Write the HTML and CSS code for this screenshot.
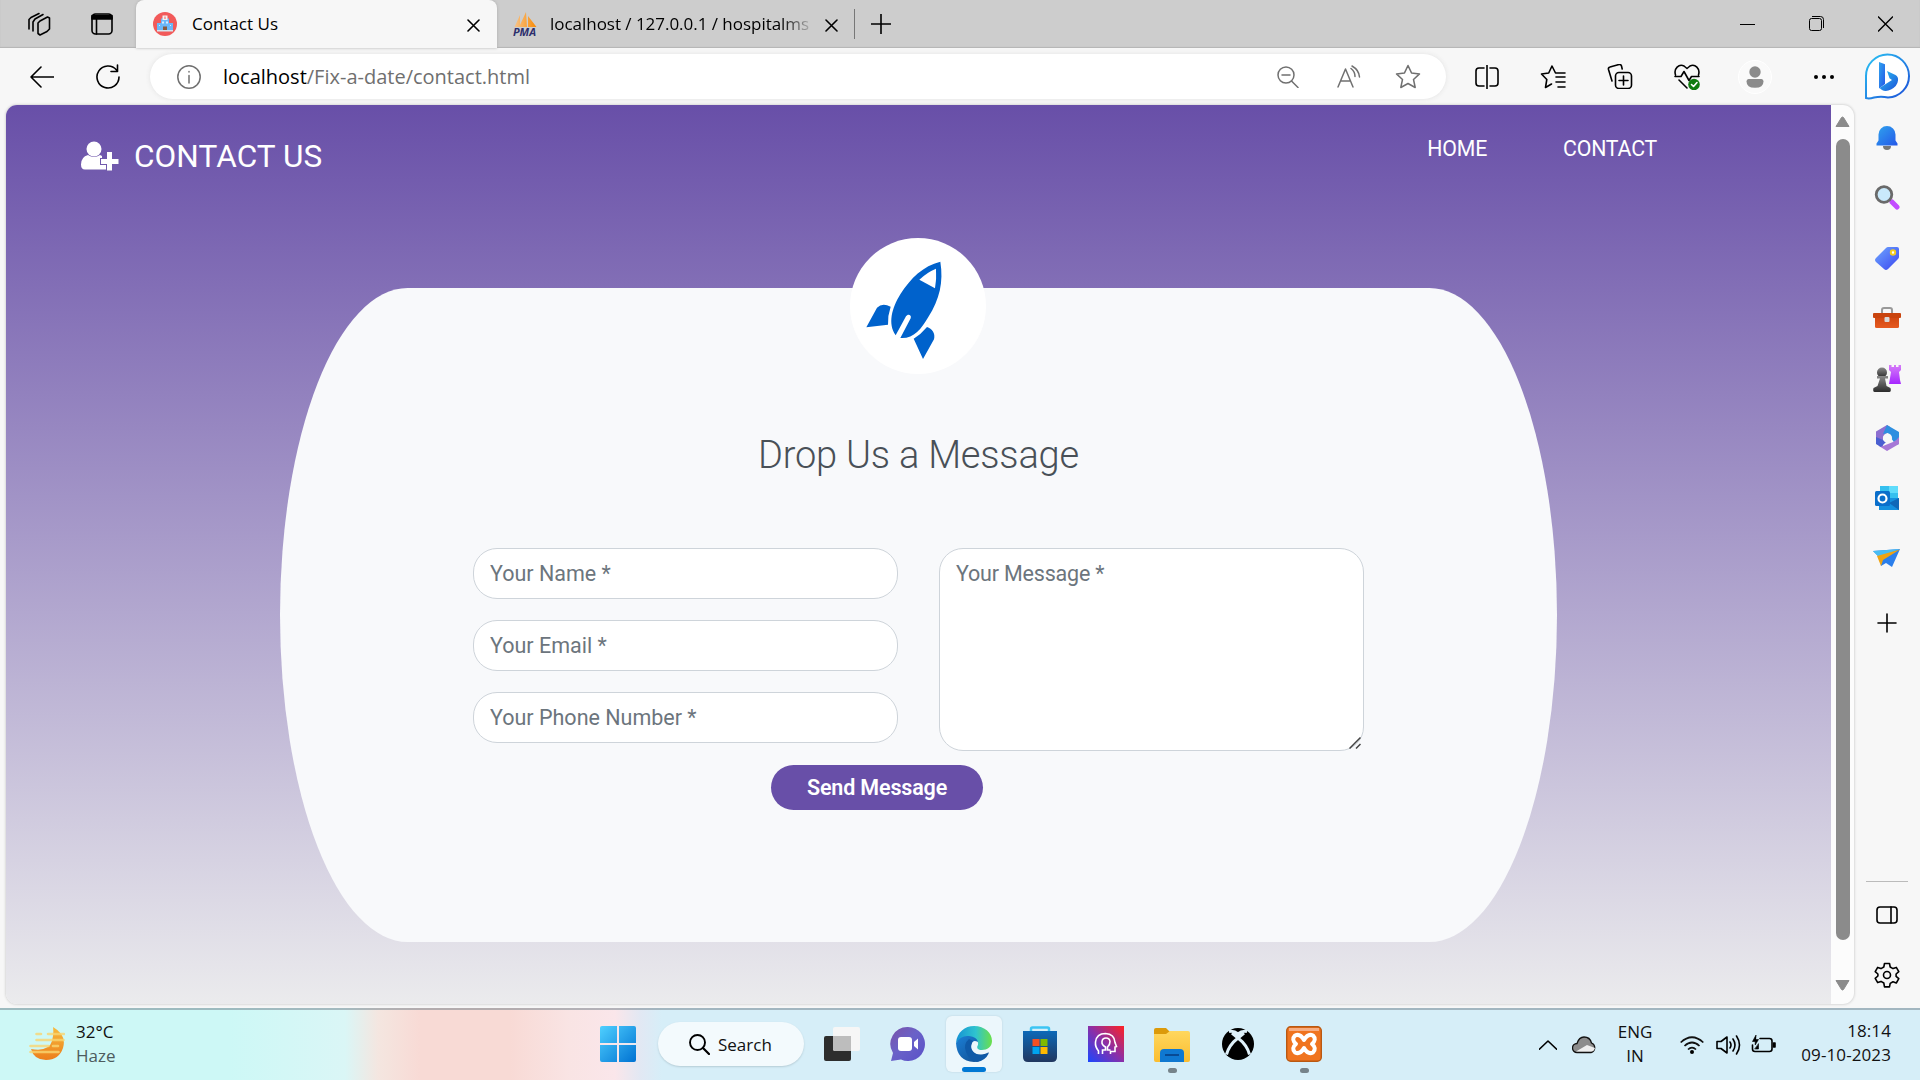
FILE: index.html
```html
<!DOCTYPE html>
<html lang="en">
<head>
<meta charset="utf-8">
<title>Contact Us</title>
<link rel="stylesheet" href="styles.css">
</head>
<body>
<svg width="0" height="0" class="defs">
  <defs>
    <linearGradient id="blue" x1="0" y1="0" x2="1" y2="1"><stop offset="0" stop-color="#2fa4ee"/><stop offset="1" stop-color="#2457e8"/></linearGradient>
    <linearGradient id="bing" x1="0" y1="0" x2="1" y2="1"><stop offset="0" stop-color="#2bc4f3"/><stop offset="1" stop-color="#1c4fd8"/></linearGradient>
    <linearGradient id="tag" x1="0" y1="0" x2="1" y2="1"><stop offset="0" stop-color="#6fa8ff"/><stop offset="1" stop-color="#3a45f0"/></linearGradient>
    <linearGradient id="orange" x1="0" y1="0" x2="0" y2="1"><stop offset="0" stop-color="#c8400c"/><stop offset="1" stop-color="#e65a20"/></linearGradient>
    <linearGradient id="grey" x1="0" y1="0" x2="0" y2="1"><stop offset="0" stop-color="#8a8a8a"/><stop offset="1" stop-color="#2c2c2c"/></linearGradient>
    <linearGradient id="violet" x1="0" y1="0" x2="0" y2="1"><stop offset="0" stop-color="#d57cf8"/><stop offset="1" stop-color="#a626ff"/></linearGradient>
    <linearGradient id="moon" x1="0" y1="0" x2="0" y2="1"><stop offset="0" stop-color="#f6bb3f"/><stop offset="1" stop-color="#ec7e1c"/></linearGradient>
    <linearGradient id="win" x1="0" y1="0" x2="1" y2="1"><stop offset="0" stop-color="#4fd0ff"/><stop offset="1" stop-color="#0072d2"/></linearGradient>
    <linearGradient id="chat" x1="0" y1="0" x2="1" y2="1"><stop offset="0" stop-color="#7b52a8"/><stop offset=".45" stop-color="#6a62c8"/><stop offset="1" stop-color="#5a50c8"/></linearGradient>
    <linearGradient id="edgeTop" x1="0" y1="0" x2="1" y2="0"><stop offset="0" stop-color="#1592d4"/><stop offset=".55" stop-color="#2fc3cf"/><stop offset="1" stop-color="#6be04a"/></linearGradient>
    <linearGradient id="edgeLow" x1="0" y1="0" x2="1" y2="1"><stop offset="0" stop-color="#1b7fd6"/><stop offset="1" stop-color="#114a8b"/></linearGradient>
    <linearGradient id="store" x1="0" y1="0" x2="0" y2="1"><stop offset="0" stop-color="#0c69b8"/><stop offset="1" stop-color="#21375f"/></linearGradient>
    <linearGradient id="head" x1="0" y1="1" x2="1" y2="0"><stop offset="0" stop-color="#1a46ff"/><stop offset=".5" stop-color="#8a2fa8"/><stop offset="1" stop-color="#ff2222"/></linearGradient>
    <linearGradient id="folder" x1="0" y1="0" x2="0" y2="1"><stop offset="0" stop-color="#ffd75e"/><stop offset="1" stop-color="#fbbd30"/></linearGradient>
    <linearGradient id="sail" x1="0" y1="0" x2="1" y2="0"><stop offset="0" stop-color="#f7c48a"/><stop offset="1" stop-color="#f98b05"/></linearGradient>
  </defs>
</svg>

<div class="tabs">
  <div class="tab-tools">
    <svg width="24" height="26" viewBox="0 0 24 26" class="line"><path d="M2 18V8.500L4 6.500 12 2.500M6 20V11L8 8l8-4.500M13 10l7.500-4 2 1v11l-2.500 2.500L13 24l-2-1.500V12z"/></svg>
    <svg width="22" height="22" viewBox="0 0 22 22" class="line"><rect x="1" y="1" width="20" height="20" rx="3.500"/><path d="M1 2.500h20V6H1z" fill="#000"/><path d="M5.500 6v15"/></svg>
  </div>
  <div class="tab active">
    <svg width="24" height="24" viewBox="0 0 24 24"><circle cx="12" cy="12" r="12" fill="#f25a5a"/><path d="M4 11h4V6.500h8V11h4v8H4z" fill="#6bb7f8"/><path d="M9.500 3.500h5V8h-5z" fill="#f3f3f3"/><path d="M11.500 4.500h1v2.500h-1z" fill="#f25a5a"/><path d="M9 9.500h2v2H9zm4 0h2v2h-2zM6 13h1v1H6zm11 0h1v1h-1z" fill="#d4ecff"/><path d="M10 14.500h4V19h-4z" fill="#8b5a3c"/><path d="M4 18h16v1.500H4z" fill="#d6e6ef"/></svg>
    <span class="tab-title">Contact Us</span>
    <svg width="13" height="13" viewBox="0 0 13 13" class="line"><path d="M1 1l11 11M12 1L1 12"/></svg>
  </div>
  <div class="tab">
    <svg width="24" height="25" viewBox="0 0 24 25"><path d="M7 3v12H1.500zM13 0l1 15H6zM15 4l8.500 11H15z" fill="url(#sail)"/><text x="0" y="24" class="pma" textLength="23" lengthAdjust="spacingAndGlyphs">PMA</text></svg>
    <span class="tab-title fade">localhost / 127.0.0.1 / hospitalms</span>
    <svg width="13" height="13" viewBox="0 0 13 13" class="line"><path d="M1 1l11 11M12 1L1 12"/></svg>
  </div>
  <div class="new-tab">
    <svg width="20" height="20" viewBox="0 0 20 20" class="line"><path d="M10 0v20M0 10h20"/></svg>
  </div>
  <div class="window-controls">
    <svg width="15" height="16" viewBox="0 0 15 16" class="thin"><path d="M0 8.500h15"/></svg>
    <svg width="15" height="16" viewBox="0 0 15 16" class="thin"><rect x=".5" y="2.500" width="12" height="12" rx="2"/><path d="M3 .5h8.500a3 3 0 0 1 3 3V12"/></svg>
    <svg width="15" height="16" viewBox="0 0 15 16" class="thin close"><path d="M0 .5l15 15M15 .5l-15 15"/></svg>
  </div>
</div>

<div class="toolbar">
  <svg class="back line" width="24" height="22" viewBox="0 0 24 22"><path d="M24 11H1M11 1L1 11l10 10"/></svg>
  <svg class="reload line" width="24" height="26" viewBox="0 0 24 26"><path d="M20.500 6A11 11 0 1 0 23 13M21.500 1v6.500H15"/></svg>
  <div class="address">
    <svg width="24" height="24" viewBox="0 0 24 24" class="line soft"><circle cx="12" cy="12" r="11.200"/><path d="M12 10.500V18M12 6.500v.5"/></svg>
    <span class="url"><b>localhost</b>/Fix-a-date/contact.html</span>
    <svg width="23" height="22" viewBox="0 0 23 22" class="line soft"><circle cx="9" cy="9" r="8"/><path d="M5 9h8M14.500 15l6.500 6.500"/></svg>
    <svg width="24" height="24" viewBox="0 0 24 24" class="line soft"><path d="M1 22L8.500 4 16 22M3.500 16h10M14 3.500q4 3 4 8M15 1q7 4 7.500 11"/></svg>
    <svg width="26" height="25" viewBox="0 0 26 25" class="line soft"><path d="M13 1.500l3.500 7.400 8 1-6 5.600 1.700 8L13 19.500 5.800 23.500l1.700-8-6-5.600 8-1z"/></svg>
  </div>
  <div class="actions">
    <svg width="24" height="24" viewBox="0 0 24 24" class="line"><path d="M9 3H4a3 3 0 0 0-3 3v12a3 3 0 0 0 3 3h5M12 0v24M15 3h5a3 3 0 0 1 3 3v12a3 3 0 0 1-3 3h-5"/></svg>
    <svg width="26" height="24" viewBox="0 0 26 24" class="line"><path d="M15.500 8L12 1 8.700 8 1.500 9l5.300 5.500L5.500 22.500l6-3.500M16 12h9M16 17h9M18 22h7M15.500 8h9.500"/></svg>
    <svg width="26" height="25" viewBox="0 0 26 25" class="line"><rect x="8.500" y="8.500" width="16" height="16" rx="3.500"/><path d="M16.500 12v9M12 16.500h9M5 17L1.500 5.500Q1 3.500 3 3l9-2.500q2-.3 2.500 1.500l.7 3"/></svg>
    <svg width="26" height="26" viewBox="0 0 26 26" class="line"><path d="M1.500 11C-.5 4.500 5-.5 10 2l3 2.500L16 2c5-2.500 10.500 2.500 8.500 9M1 12.500h6l3-5 5 9 2.500-4H25M5 16l8 8"/><circle cx="20" cy="20.500" r="5.800" fill="#107c10" stroke="none"/><path d="M17.500 20.500l2 2 3.500-4" stroke="#fff"/></svg>
    <svg width="34" height="34" viewBox="0 0 34 34"><circle cx="17" cy="17" r="16.500" fill="#fafafa" stroke="#fff"/><circle cx="17" cy="12" r="5.700" fill="#8b8b8b"/><path d="M10.500 19h13q2 0 2 2.500 0 6.300-8.500 6.300t-8.500-6.300Q8.500 19 10.500 19z" fill="#8b8b8b"/></svg>
    <svg width="20" height="6" viewBox="0 0 20 6"><circle cx="2" cy="3" r="2"/><circle cx="10" cy="3" r="2"/><circle cx="18" cy="3" r="2"/></svg>
  </div>
  <svg class="bing" width="46" height="48" viewBox="0 0 46 48"><path d="M2 45V23A21.500 21.500 0 1 1 24 44.500Q17 43 10 44.500 5 46 2 45z" fill="#fff" stroke="url(#bing)" stroke-width="2"/><path d="M15 9l6 2.200V31l-6 4.500z" fill="url(#blue)"/><path d="M23 18l8.500 4q3 1.500 2.500 5.500-.5 5.500-7 9-5 2.500-9 .5l-2.500-2 12.500-8-2.500-1.700z" fill="url(#bing)"/></svg>
</div>

<div class="workspace">
  <div class="viewport">
    <div class="page">
      <header class="site-header">
        <h1 class="brand">
          <svg width="38" height="30" viewBox="0 0 38 30" fill="#fff"><circle cx="13" cy="8" r="7.500"/><path d="M7 14q6 4 12 0l2 1v2h-2v7h6v4.500H4q-4 0-4-5Q0 16 7 14z"/><path d="M26 11h5v7h6.500v5H31v6.500h-5V23h-6v-5h6z"/></svg>
          <span>CONTACT US</span>
        </h1>
        <nav class="site-nav"><a>HOME</a><a>CONTACT</a></nav>
      </header>
      <main class="contact">
        <div class="badge">
          <svg width="136" height="136" viewBox="90 54 408 408" fill="#0062cc"><path d="M361 125c10 62-2 112-36 166-22 38-45 66-84 63l31-59c4-11-9-15-14-6l-31 57c-24-34-12-81 14-123 30-48 69-86 120-98z"/><path d="M298 179q23-22 50-33 2 31-3 59z" fill="#fff"/><path d="M139 322l32-59q16-16 41-3-9 26-8 54zM281 356l28 61 33-59c5-18-6-33-21-37q-18 22-40 35z"/></svg>
        </div>
        <h2 class="title">Drop Us a Message</h2>
        <form class="form">
          <div class="column">
            <input class="field" type="text" placeholder="Your Name *">
            <input class="field" type="text" placeholder="Your Email *">
            <input class="field" type="text" placeholder="Your Phone Number *">
          </div>
          <div class="message-box">
            <textarea class="field message" placeholder="Your Message *"></textarea>
            <svg class="grip" width="12" height="12" viewBox="0 0 12 12"><path d="M.5 11.500l11-11M7 11.500L11.500 7" stroke="#444" stroke-width="1.500"/></svg>
          </div>
        </form>
        <button class="send" type="button">Send Message</button>
      </main>
    </div>
    <div class="scrollbar">
      <svg width="15" height="11" viewBox="0 0 15 11"><path d="M1 10.500L6.500 1.500q1-1 2 0L14 10.500z" fill="#8b8b8b" stroke="#8b8b8b"/></svg>
      <div class="thumb"></div>
      <svg width="15" height="11" viewBox="0 0 15 11"><path d="M1 .5L6.500 9.500q1 1 2 0L14 .5z" fill="#8b8b8b" stroke="#8b8b8b"/></svg>
    </div>
  </div>

  <aside class="sidebar">
    <svg width="26" height="26" viewBox="0 0 26 26"><path d="M9 21h8q0 4-4 4t-4-4z" fill="#777"/><path d="M2.500 20.500v-2l2-3V9.500a8.500 8.500 0 0 1 17 0v6l2 3v2z" fill="url(#blue)"/></svg>
    <svg width="26" height="26" viewBox="0 0 26 26"><path d="M18 17l5 5" stroke="#c24bff" stroke-width="5" stroke-linecap="round"/><circle cx="10" cy="9.500" r="7.800" fill="#c9e9fb" stroke="#6a6a6a" stroke-width="2.800"/></svg>
    <svg width="26" height="26" viewBox="0 0 26 26"><path d="M14 2h9q2 0 2 2v8q0 1-1 2L14 24q-2 2-4 0l-8-7q-2-2 0-4L12 3q1-1 2-1z" fill="url(#tag)"/><circle cx="19" cy="7.500" r="2.200" fill="#fff" stroke="#f5cc1d" stroke-width="2"/></svg>
    <svg width="28" height="24" viewBox="0 0 28 24"><path d="M9 7V4q0-2 2-2h6q2 0 2 2v3" fill="none" stroke="#999" stroke-width="2"/><rect x="2" y="7" width="24" height="15" rx="1.500" fill="url(#orange)"/><rect x="0" y="7" width="28" height="5" rx="1" fill="#c9440e"/><rect x="11.500" y="11" width="5" height="5" rx="1" fill="#d9d9d9"/></svg>
    <svg width="28" height="28" viewBox="0 0 28 28"><path d="M16 1h2.500v2H21V1h2v2h2.500V1H28v5l-2 2 1 8 1 4H16l2-12-2-2z" fill="url(#violet)"/><g fill="url(#grey)"><circle cx="9" cy="8.500" r="5"/><path d="M4 12h11v2.500h-3l1.500 7.500 4 2q1 4-1 4h-15q-2 0-1-4l4-2L7 14.500H4z"/></g></svg>
    <svg width="26" height="28" viewBox="0 0 26 28"><path d="M13 1L2 7.500v12L7 23l2-1V13l4-4 3-6z" fill="#8d6fd0"/><path d="M13 1l12 7v12l-3 1-5-7-3-5-5 1z" fill="#2e8fe0"/><path d="M5 22l8 5 12-7v-7q-2 3-6 5L9 22z" fill="#a678d6"/><path d="M2 13v7l5 3 5-5-3-2z" fill="#4a5fd0"/><circle cx="13.500" cy="14" r="4.600" fill="#f7f7f7"/></svg>
    <svg width="26" height="26" viewBox="0 0 26 26"><path d="M6 1h18v13H6z" fill="#35c0ef"/><path d="M15 1h9v7h-9z" fill="#5fdcfb"/><path d="M5 13h20v12H5z" fill="#1490df"/><path d="M25 13v12L15 18z" fill="#1068b8"/><rect x="1" y="6" width="15" height="15" rx="1.500" fill="#0a6fcb"/><circle cx="8.500" cy="13.500" r="4" fill="none" stroke="#fff" stroke-width="2.200"/></svg>
    <svg width="28" height="20" viewBox="0 0 28 20"><path d="M0 3L27 1 19 19l-6-4-5 3-1-8z" fill="#2b7fec"/><path d="M0 3L27 1 6 9z" fill="#49bdf3"/><path d="M4 8L27 1.500 10 12 8 18z" fill="#efa312"/></svg>
    <svg class="add line" width="20" height="20" viewBox="0 0 20 20"><path d="M10 1v18M1 10h18"/></svg>
    <div class="sidebar-bottom">
      <svg width="22" height="18" viewBox="0 0 22 18" class="line"><rect x="1" y="1" width="20" height="16" rx="3"/><path d="M15 1v16"/></svg>
      <svg width="26" height="26" viewBox="0 0 26 26" class="line"><circle cx="13" cy="13" r="3.500"/><path d="M10.500 1.500h5l.7 3.500 2.800 1.600 3.300-1.200 2.500 4.300-2.700 2.300v2.400l2.700 2.300-2.500 4.300-3.300-1.200-2.800 1.600-.7 3.500h-5L9.800 21 7 19.400 3.700 20.600l-2.500-4.300L3.900 14V12L1.200 9.700l2.500-4.300L7 6.600 9.800 5z"/></svg>
    </div>
  </aside>
</div>

<div class="taskbar">
  <div class="weather">
    <svg width="36" height="34" viewBox="0 0 36 34"><path d="M24 0q14 8 10 21-4 12-17 12Q5 33 2 22q18 3 21-8 2-7 1-14z" fill="url(#moon)"/><path d="M7.500 7h4.500M19 7h16M7.500 13h27M1.500 19h18M24 19h5M1.500 25h28" stroke="#f9d672" stroke-width="2.600" stroke-linecap="round" opacity=".8"/></svg>
    <div class="two-line"><span>32°C</span><span class="dim">Haze</span></div>
  </div>
  <div class="apps">
    <div class="app"><svg width="36" height="36" viewBox="0 0 36 36" fill="url(#win)"><path d="M2 0h15v17H0V2q0-2 2-2zM19 0h15q2 0 2 2v15H19zM0 19h17v17H2q-2 0-2-2zM19 19h17v15q0 2-2 2H19z"/></svg></div>
    <div class="search">
      <svg width="21" height="21" viewBox="0 0 21 21" class="line"><circle cx="8.500" cy="8.500" r="7.500" stroke-width="1.900"/><path d="M14 14l6 6" stroke-width="2.200"/></svg>
      <span>Search</span>
    </div>
    <div class="app"><svg width="36" height="36" viewBox="0 0 36 36"><rect y="10" width="27" height="25" rx="2" fill="#2d2d2d"/><rect x="9" y="1" width="27" height="24" rx="2" fill="#f6f6f6"/><path d="M9 10h18v15H11q-2 0-2-2z" fill="#bdbdbd"/></svg></div>
    <div class="app"><svg width="36" height="36" viewBox="0 0 36 36"><path d="M18 1a17 17 0 1 1-7 32.500L1 35l2-8A17 17 0 0 1 18 1z" fill="url(#chat)"/><rect x="8" y="11" width="14" height="14" rx="3" fill="#fff"/><path d="M24 16l4-3.500v11L24 20z" fill="#fff"/></svg></div>
    <div class="app current"><svg width="36" height="36" viewBox="0 0 36 36"><path d="M0 17C1 6 9 0 18 0c11 0 18 7 18 15 0 6-5 9-10 9-4 0-6-2-4-5 1-4-3-7-8-6Q5 12 0 17z" fill="url(#edgeTop)"/><path d="M0 17q5-8 13-7 8 1 9 6-5-3-7 2c-2 9 8 14 18 8Q27 36 18 36 1 35 0 17z" fill="url(#edgeLow)"/><path d="M13 13q-6 5-3 13 3 8 11 10 8-1 12-9-12 5-17-3-2-4 1-9z" fill="#0f5aa8"/></svg></div>
    <div class="app"><svg width="36" height="36" viewBox="0 0 36 36"><path d="M9 6V3q0-1.500 1.500-1.500h15Q27 1.500 27 3v3" fill="none" stroke="#3cc5f3" stroke-width="2.500"/><path d="M1 5h34v26q0 5-5 5H6q-5 0-5-5z" fill="url(#store)"/><path d="M10.500 13h7v7h-7z" fill="#f25022"/><path d="M18.500 13h7v7h-7z" fill="#7fba00"/><path d="M10.500 21h7v7h-7z" fill="#00a4ef"/><path d="M18.500 21h7v7h-7z" fill="#ffb900"/></svg></div>
    <div class="app"><svg width="36" height="36" viewBox="0 0 36 36"><path d="M0 0h36v36H0z" fill="url(#head)"/><path d="M10.500 28v-3Q7 21 7.500 16q1-8.500 10-8.500 9 .5 9.500 9l1.500 4-1.500.5v4.500h-4.500V28M14.500 28v-4h3v-3q-4-2-3.500-5.500.5-3.500 4-3.500t4 3.500Q22 19 19.500 21v3h3" fill="none" stroke="#fff" stroke-width="1.600"/></svg></div>
    <div class="app running"><svg width="36" height="36" viewBox="0 0 36 36"><path d="M0 4q0-2 2-2h10l4 4v6H0z" fill="#dc9a0a"/><path d="M0 8h12l4-3h18q2 0 2 2v27q0 2-2 2H2q-2 0-2-2z" fill="url(#folder)"/><path d="M6 36V27q0-4 4-4h16q4 0 4 4v9z" fill="#0f78d1"/><path d="M11 29h14" stroke="#084a94" stroke-width="2"/></svg></div>
    <div class="app"><svg width="32" height="32" viewBox="0 0 32 32"><circle cx="16" cy="16" r="16" fill="#000"/><path d="M7 3.500q5-1 9 2.500 4-3.500 9-2.500M16 10q9 7 11.500 16.500M16 10Q7 17 4.500 26.500M16 10L10 5M16 10l6-5" fill="none" stroke="#dff1fa" stroke-width="3"/></svg></div>
    <div class="app running"><svg width="36" height="36" viewBox="0 0 36 36"><rect x=".7" y=".7" width="34.600" height="34.600" rx="4" fill="#f0741f" stroke="#b95812" stroke-width="1.400"/><path d="M3 2h30v3H3z" fill="#f7ad82"/><path d="M18 14Q14 7 9 9.500q-4 4 1 8.500-5 4-1 8.500 5 2.500 9-4.500 4 7 9 4.500 4-4.500-1-8.500 5-4.500 1-8.500-5-2.500-9 4.500z" fill="none" stroke="#fff" stroke-width="4" stroke-linejoin="round"/></svg></div>
  </div>
  <div class="tray">
    <svg width="18" height="10" viewBox="0 0 18 10" class="line"><path d="M0 9.500L9 1l9 8.500"/></svg>
    <svg class="cloud" width="24" height="18" viewBox="0 0 24 18"><path d="M5 16.500a4.500 4.500 0 0 1 0-9Q7 1 12 1q6 0 7.500 6a5 5 0 0 1-.5 9.500z" fill="#8c8c8c" stroke="#111" stroke-width="1.300"/><path d="M4 15.500L15 9l8 3q-1 3.500-4 3.500z" fill="#eee"/></svg>
    <div class="lang"><span>ENG</span><span>IN</span></div>
    <svg class="wifi" width="24" height="18" viewBox="0 0 24 18"><path d="M.7 6.500Q12-4 23.300 6.500M4.500 10Q12 3 19.500 10M8 13.500q4-4 8 0" fill="none" stroke="#111" stroke-width="1.700"/><circle cx="12" cy="16" r="2"/></svg>
    <svg class="volume line" width="25" height="20" viewBox="0 0 25 20"><path d="M1 6.500h4L11 2v16l-6-4.500H1zM14 7q2 3 0 6M17 4q4 6 0 12M20.500 1q6 9 0 18"/></svg>
    <svg class="battery line" width="25" height="20" viewBox="0 0 25 20"><path d="M9 3.500h9.500q2.500 0 2.500 2.500v8q0 2.500-2.500 2.500H4q-2.500 0-2.500-2.500V10"/><path d="M22.500 8h1.500v4h-1.500z" fill="#000"/><path d="M5 0L1.500 6.500h2.700V10L7.500 4.500H5zM4 14h3.500V9z" fill="#000" stroke-width=".6"/></svg>
    <div class="clock"><span>18:14</span><span>09-10-2023</span></div>
  </div>
</div>
</body>
</html>
```
FILE: styles.css
```css
* { box-sizing: border-box; }

body {
  margin: 0;
  width: 1920px;
  height: 1080px;
  overflow: hidden;
  display: flex;
  flex-direction: column;
  background: #f7f7f7;
  font-family: "Open Sans", sans-serif;
  font-size: 17px;
  color: #111;
}

svg { display: block; flex: none; }
.defs { position: absolute; }
.line { fill: none; stroke: #000; stroke-width: 1.6; stroke-linecap: round; stroke-linejoin: round; }
.thin { fill: none; stroke: #000; stroke-width: 1; }
.thin.close { stroke-width: 1.4; }
.soft { stroke: #707070; stroke-width: 1.5; }

/* Tab strip */
.tabs {
  display: flex;
  flex: none;
  height: 48px;
  background: #cdcdcd;
  box-shadow: inset 0 -1px 1px #b5b5b5;
}
.tab-tools { width: 136px; display: flex; align-items: center; gap: 40px; padding-left: 27px; }
.tab { display: flex; align-items: center; width: 357px; padding: 0 16px; gap: 13px; }
.tab > svg:last-child { margin-top: 2px; }
.tab.active {
  width: 361px;
  padding: 0 17px;
  gap: 15px;
  background: #f7f7f7;
  border-radius: 8px 8px 0 0;
  box-shadow: 0 0 3px #aaa;
}
.tab-title { flex: 1; line-height: 24px; margin-top: -1px; color: #000; white-space: nowrap; }
.fade { letter-spacing: -0.03px; -webkit-mask-image: linear-gradient(90deg, #000 88%, transparent 101%); mask-image: linear-gradient(90deg, #000 88%, transparent 101%); }
.pma { font: italic bold 10px "Open Sans", sans-serif; fill: #2c2f6c; }
.new-tab { display: flex; align-items: center; height: 30px; margin: 9px 0; padding-left: 16px; border-left: 1px solid #777; }
.window-controls { display: flex; align-items: center; gap: 54px; margin-left: auto; padding-right: 27px; }

/* Toolbar */
.toolbar { display: flex; flex: none; align-items: center; height: 57px; }
.back { margin-left: 30px; }
.reload { margin: 0 30px 0 42px; }
.address {
  display: flex;
  align-items: center;
  width: 1296px;
  height: 45px;
  padding: 0 25px 0 27px;
  background: #fff;
  border-radius: 23px;
  box-shadow: 0 0 5px #e2e2e2;
}
.address > svg:nth-of-type(3) { margin-left: 37px; }
.address > svg:nth-of-type(4) { margin-left: 34px; }
.url { flex: 1; margin-left: 22px; font-size: 20px; line-height: 28px; color: #6f6f6f; }
.url b { font-weight: 400; color: #000; }
.actions { display: flex; align-items: center; margin-left: 29px; gap: 41px; }
.actions > :nth-child(5) { margin-left: -3px; }
.actions > :nth-child(6) { margin-left: 1px; }
.bing { margin-left: 30px; }

/* Browser body */
.workspace { display: flex; flex: 1; min-height: 0; }
.viewport {
  display: flex;
  width: 1848px;
  height: 899px;
  margin-left: 6px;
  border-radius: 11px;
  overflow: hidden;
  background: #fcfcfc;
  box-shadow: 0 0 3px #bbb;
}
.page {
  width: 1825px;
  background: linear-gradient(#684fa8, #ebebed);
  font-family: Roboto, sans-serif;
}
.scrollbar { display: flex; flex: 1; flex-direction: column; align-items: center; padding: 11px 0 13px; }
.thumb { width: 14px; height: 801px; margin: 12px 0 auto; border-radius: 7px; background: #8b8b8b; }

.site-header { display: flex; height: 183px; color: #fff; }
.brand { display: flex; align-items: center; gap: 15px; height: 38px; margin: 32px 0 0 75px; font-size: 31.500px; font-weight: 400; letter-spacing: 0.1px; }
.site-nav { display: flex; gap: 76px; margin: 29px 174px 0 auto; font-size: 21.3px; line-height: 30px; letter-spacing: -0.2px; }

.contact {
  display: flex;
  flex-direction: column;
  align-items: center;
  width: 1277px;
  height: 654px;
  margin-left: 274px;
  background: #f8f9fb;
  border-radius: 10% / 50%;
}
.badge { margin: -50px 1px 0 0; border-radius: 50%; background: #fff; overflow: hidden; }
.title { margin: 56px 0 0; font-size: 38px; line-height: 50px; font-weight: 300; letter-spacing: -0.2px; color: #495057; }
.form { display: flex; gap: 41px; margin-top: 68px; }
.column { display: flex; flex-direction: column; gap: 21px; }
.field {
  display: block;
  width: 425px;
  height: 51px;
  padding: 7px 16px;
  border: 1px solid #ced4da;
  border-radius: 24px;
  background: #fff;
  font: 21.5px/32px Roboto, sans-serif;
}
.field::placeholder { color: #6c757d; opacity: 1; }
.message-box { position: relative; height: 204px; }
.message { height: 203px; padding-top: 9px; resize: none; letter-spacing: -0.2px; }
.grip { position: absolute; right: 3px; bottom: 3px; }
.send {
  width: 212px;
  height: 45px;
  margin: 13px 83px 0 0;
  padding: 0;
  border: 0;
  border-radius: 24px;
  background: #684fa8;
  color: #fff;
  font: 600 21.5px/30px Roboto, sans-serif;
  letter-spacing: -0.15px;
}

/* Edge sidebar */
.sidebar { display: flex; flex: 1; flex-direction: column; align-items: center; padding-top: 3px; }
.sidebar > svg { height: 60px; }
.sidebar > .add { margin-top: 5px; }
.sidebar-bottom {
  display: flex;
  flex-direction: column;
  align-items: center;
  gap: 38px;
  width: 42px;
  margin: auto 0 20px;
  padding-top: 24px;
  border-top: 1px solid #bbb;
}

/* Taskbar */
.taskbar {
  display: grid;
  grid-template-columns: 585px 753px 1fr;
  flex: none;
  height: 72px;
  border-top: 2px solid rgba(110, 125, 135, .5);
  background: linear-gradient(90deg, #cdf8f6 0, #cdf8f6 230px, #daf6f6 345px, #f4e6e0 378px, #f8dad5 420px, #f8dad5 510px, #f9e4e4 570px, #fae6ea 615px, #e2e8f3 640px, #d6eef8 662px);
}
.weather { display: flex; align-items: center; gap: 11px; padding-left: 29px; }
.weather svg { margin-top: -3px; }
.two-line, .lang, .clock { display: flex; flex-direction: column; line-height: 24px; }
.two-line { margin-bottom: 2px; }
.dim { color: #4d5c5e; }
.apps { display: flex; align-items: center; }
.app { position: relative; display: flex; align-items: center; justify-content: center; width: 56px; height: 56px; margin: -2px 5px 0; border-radius: 6px; }
.current { background: #ecf7fc; box-shadow: 0 0 2px #b9cfd9; }
.running::after, .current::after {
  content: "";
  position: absolute;
  bottom: -1px;
  width: 9px;
  height: 5px;
  border-radius: 3px;
  background: #76838a;
}
.current::after { bottom: 0; width: 24px; background: #0078d4; }
.search {
  display: flex;
  align-items: center;
  gap: 8px;
  width: 146px;
  height: 44px;
  margin: -2px 5px 0 7px;
  padding-left: 31px;
  border-radius: 22px;
  background: #f3fafd;
  box-shadow: 0 1px 2px #b5ccd6;
}
.tray { display: flex; align-items: center; padding-left: 201px; }
.cloud { margin-left: 15px; }
.lang { width: 40px; margin: 2px 0 4px 19px; align-items: center; }
.wifi { margin-left: 25px; }
.volume { margin-left: 12px; }
.battery { margin-left: 10px; }
.clock { margin: 0 29px 4px auto; align-items: flex-end; letter-spacing: 0.1px; }
```
